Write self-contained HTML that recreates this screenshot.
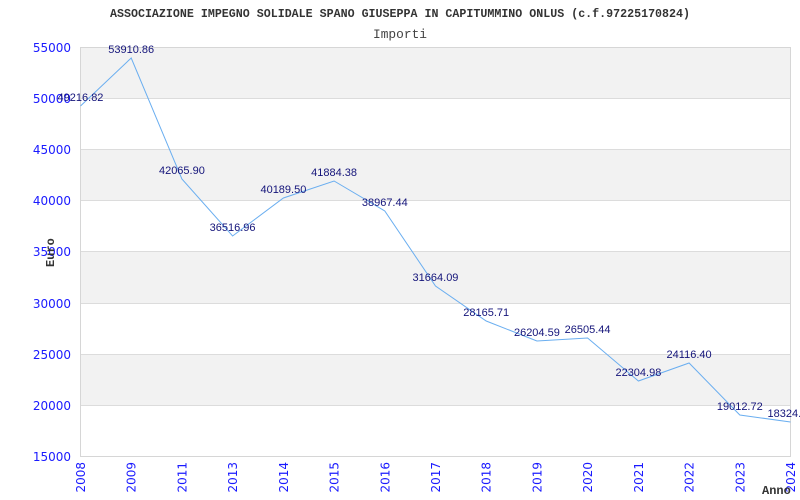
<!DOCTYPE html>
<html><head><meta charset="utf-8"><style>
html,body{margin:0;padding:0;background:#fff;width:800px;height:500px;overflow:hidden}
svg{display:block}
.yl{font:12px "DejaVu Sans","Liberation Sans",sans-serif;fill:#1a1aff}
.dl{font:11px "Liberation Sans",sans-serif;fill:#14147a}
</style></head><body>
<svg width="800" height="500" viewBox="0 0 800 500" xmlns="http://www.w3.org/2000/svg">
<text x="400" y="17" text-anchor="middle" font-family="Liberation Mono,monospace" font-weight="bold" font-size="12" fill="#333" textLength="580" lengthAdjust="spacingAndGlyphs">ASSOCIAZIONE IMPEGNO SOLIDALE SPANO GIUSEPPA IN CAPITUMMINO ONLUS (c.f.97225170824)</text>
<text x="400" y="38" text-anchor="middle" font-family="Liberation Mono,monospace" font-size="13" fill="#444" textLength="54" lengthAdjust="spacingAndGlyphs">Importi</text>
<rect x="80.5" y="47" width="710" height="51" fill="#f2f2f2"/>
<rect x="80.5" y="149" width="710" height="51" fill="#f2f2f2"/>
<rect x="80.5" y="251" width="710" height="52" fill="#f2f2f2"/>
<rect x="80.5" y="354" width="710" height="51" fill="#f2f2f2"/>
<g stroke="#dcdcdc" stroke-width="1">
<line x1="80.5" y1="98.5" x2="790" y2="98.5"/><line x1="80.5" y1="149.5" x2="790" y2="149.5"/>
<line x1="80.5" y1="200.5" x2="790" y2="200.5"/><line x1="80.5" y1="251.5" x2="790" y2="251.5"/>
<line x1="80.5" y1="303.5" x2="790" y2="303.5"/><line x1="80.5" y1="354.5" x2="790" y2="354.5"/>
<line x1="80.5" y1="405.5" x2="790" y2="405.5"/>
</g>
<rect x="80.5" y="47.5" width="710" height="409" fill="none" stroke="#d6d6d6"/>
<g class="yl" text-anchor="end">
<text x="71" y="52">55000</text><text x="71" y="103">50000</text><text x="71" y="154">45000</text>
<text x="71" y="205">40000</text><text x="71" y="256">35000</text><text x="71" y="308">30000</text>
<text x="71" y="359">25000</text><text x="71" y="410">20000</text><text x="71" y="461">15000</text>
</g>
<polyline fill="none" stroke="#6aaef0" stroke-width="1" points="80.5,106 131.2,58 181.9,179 232.6,236 283.4,198 334.1,181 384.8,211 435.5,286 486.2,321 536.9,341 587.6,338 638.4,381 689.1,363 739.8,415 790.5,422"/>
<g class="dl" text-anchor="middle">
<text x="80.5" y="101">49216.82</text><text x="131.2" y="53">53910.86</text><text x="181.9" y="174">42065.90</text>
<text x="232.6" y="231">36516.96</text><text x="283.4" y="193">40189.50</text><text x="334.1" y="176">41884.38</text>
<text x="384.8" y="206">38967.44</text><text x="435.5" y="281">31664.09</text><text x="486.2" y="316">28165.71</text>
<text x="536.9" y="336">26204.59</text><text x="587.6" y="333">26505.44</text><text x="638.4" y="376">22304.98</text>
<text x="689.1" y="358">24116.40</text><text x="739.8" y="410">19012.72</text><text x="790.5" y="417">18324.50</text>
</g>
<g class="yl" text-anchor="end">
<text transform="translate(85,462) rotate(-90)">2008</text>
<text transform="translate(135.7,462) rotate(-90)">2009</text>
<text transform="translate(186.4,462) rotate(-90)">2011</text>
<text transform="translate(237.1,462) rotate(-90)">2013</text>
<text transform="translate(287.9,462) rotate(-90)">2014</text>
<text transform="translate(338.6,462) rotate(-90)">2015</text>
<text transform="translate(389.3,462) rotate(-90)">2016</text>
<text transform="translate(440,462) rotate(-90)">2017</text>
<text transform="translate(490.7,462) rotate(-90)">2018</text>
<text transform="translate(541.4,462) rotate(-90)">2019</text>
<text transform="translate(592.1,462) rotate(-90)">2020</text>
<text transform="translate(642.9,462) rotate(-90)">2021</text>
<text transform="translate(693.6,462) rotate(-90)">2022</text>
<text transform="translate(744.3,462) rotate(-90)">2023</text>
<text transform="translate(795,462) rotate(-90)">2024</text>
</g>
<text transform="translate(54,267) rotate(-90)" font-family="Liberation Mono,monospace" font-weight="bold" font-size="12" fill="#333">Euro</text>
<text x="762" y="494" font-family="Liberation Mono,monospace" font-weight="bold" font-size="12" fill="#333">Anno</text>
</svg>
</body></html>
